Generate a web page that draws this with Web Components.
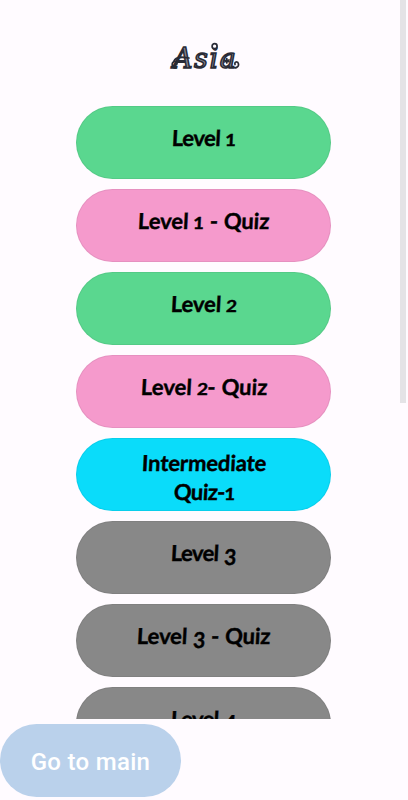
<!DOCTYPE html>
<html lang="en">
<head>
<meta charset="utf-8">
<meta name="viewport" content="width=device-width, initial-scale=1">
<title>Asia</title>
<style>
  html, body { margin: 0; height: 100%; overflow: hidden; }
  body { background: #fffbff; }
</style>
</head>
<body>
<level-screen>
  <region-title slot="title" width="63">Asia</region-title>
  <level-button kind="level"><fit-label width="65">Level 1</fit-label></level-button>
  <level-button kind="quiz"><fit-label width="133">Level 1 - Quiz</fit-label></level-button>
  <level-button kind="level"><fit-label width="67">Level 2</fit-label></level-button>
  <level-button kind="quiz"><fit-label width="128">Level 2- Quiz</fit-label></level-button>
  <level-button kind="intermediate"><fit-label width="126">Intermediate</fit-label><fit-label width="62">Quiz-1</fit-label></level-button>
  <level-button kind="locked"><fit-label width="67">Level 3</fit-label></level-button>
  <level-button kind="locked"><fit-label width="135">Level 3 - Quiz</fit-label></level-button>
  <level-button kind="locked"><fit-label width="67">Level 4</fit-label></level-button>
  <main-button slot="footer">Go to main</main-button>
</level-screen>

<script>
(function () {
  function shadow(el, html) {
    var root = el.attachShadow({ mode: "open" });
    root.innerHTML = html;
    return root;
  }

  // spread the letters until the run is as wide as asked
  function fit(run, target) {
    run.style.letterSpacing = "";
    run.style.marginRight = "";
    var gap = (target - run.getBoundingClientRect().width) / (run.textContent.length - 1);
    run.style.letterSpacing = gap.toFixed(3) + "px";
    run.style.marginRight = (-gap).toFixed(3) + "px";
  }

  class LevelButton extends HTMLElement {
    connectedCallback() {
      if (this.shadowRoot) return;
      shadow(this,
        "<style>" +
          ":host{display:flex;flex-direction:column;align-items:center;flex:none;box-sizing:border-box;" +
            "width:255px;height:73px;padding-top:16px;border-radius:36.5px;cursor:pointer;" +
            "border:1px solid rgba(0,0,0,.06);color:#000;font:700 22px Lato,sans-serif}" +
          ":host([kind=level]){background:#5ad78f}" +
          ":host([kind=quiz]){background:#f59acc}" +
          ":host([kind=intermediate]){background:#0adcfa;padding-top:9px}" +
          ":host([kind=locked]){background:#888}" +
        "</style><slot></slot>");
    }
  }

  class FitLabel extends HTMLElement {
    connectedCallback() {
      if (this.shadowRoot) return;
      // old-style figures: 1 and 2 sit at x-height, 3 and 4 hang below the line
      var html = this.textContent.replace(/\d/g, function (d) {
        return '<span class="' + (d > "2" ? "num low" : "num") + '">' + d + "</span>";
      });
      var root = shadow(this,
        "<style>" +
          ":host{display:block;height:29px;line-height:29px;white-space:nowrap}" +
          ".run{display:inline-block;transform:skewX(-3deg);word-spacing:.5px;-webkit-text-stroke:.4px #000}" +
          ".num{display:inline-block;font-size:16.5px;line-height:1;transform:scaleX(1.15)}" +
          ".low{font-size:22px;transform:translateY(3.5px) scaleX(.95)}" +
        "</style>" +
        '<span class="run">' + html + "</span>");
      fit(root.querySelector(".run"), Number(this.getAttribute("width")));
    }
  }

  class RegionTitle extends HTMLElement {
    connectedCallback() {
      if (this.shadowRoot) return;
      var root = shadow(this,
        "<style>" +
          ":host{display:block;position:relative;width:68px;height:40px;line-height:40px;white-space:nowrap;" +
            "font-family:'DejaVu Serif',serif;font-style:italic;font-size:27px;color:#85848f}" +
          ".run{display:inline-block;margin-left:2px;-webkit-text-stroke:1.5px #292b36}" +
          "svg{position:absolute;left:0;top:0;overflow:visible}" +
        "</style>" +
        '<span class="run">' + this.textContent + "</span>" +
        // curls of the lettering: dot ring, star in the bowl, loops at both ends
        '<svg width="68" height="40" fill="none" stroke="#292b36" stroke-width="1.7" stroke-linecap="round">' +
          '<circle cx="43.6" cy="7.2" r="2.5" fill="#fffbff"></circle>' +
          '<path d="M5 29C1 30 0 24 3 22.5C6 21.5 7 25 4.5 26"></path>' +
          '<path d="M3 22C5 17 12 18 18 19"></path>' +
          '<path d="M62 28C64 30 68 28 67.5 25C67 22 63 22.5 64 25.5"></path>' +
          '<path d="M55.8 19.5V24M53.6 21.2L58 22.6M58 21L53.8 22.8"></path>' +
        "</svg>");
      fit(root.querySelector(".run"), Number(this.getAttribute("width")));
    }
  }

  class MainButton extends HTMLElement {
    connectedCallback() {
      if (this.shadowRoot) return;
      shadow(this,
        "<style>" +
          ":host{display:flex;align-items:center;justify-content:center;box-sizing:border-box;" +
            "width:181px;height:73px;padding-top:2px;border-radius:36.5px;background:#bad1eb;color:#fff;" +
            "font:500 24px Roboto,sans-serif;letter-spacing:.3px;cursor:pointer}" +
        "</style><slot></slot>");
    }
  }

  class LevelScreen extends HTMLElement {
    connectedCallback() {
      if (this.shadowRoot) return;
      shadow(this,
        "<style>" +
          ":host{display:flex;flex-direction:column;width:408px;height:800px;overflow:hidden}" +
          ".scroller{display:flex;height:719px;flex:none;overflow:hidden;box-sizing:border-box}" +
          ".list{flex:1;display:flex;flex-direction:column;align-items:center;gap:9.9px;margin-left:7.8px}" +
          ".head{height:96.5px;flex:none;display:flex;justify-content:center;box-sizing:border-box;padding-top:39px;padding-left:2px}" +
          ".bar{flex:none;width:5.5px;height:402.5px;margin-right:2.5px;background:#e4e3e6}" +
          "footer{padding-top:5px}" +
        "</style>" +
        '<div class="scroller"><div class="list"><div class="head"><slot name="title"></slot></div><slot></slot></div>' +
        '<div class="bar"></div></div><footer><slot name="footer"></slot></footer>');
    }
  }

  // the screen and its buttons come first: labels are measured in the font they inherit
  customElements.define("level-screen", LevelScreen);
  customElements.define("level-button", LevelButton);
  customElements.define("fit-label", FitLabel);
  customElements.define("region-title", RegionTitle);
  customElements.define("main-button", MainButton);
})();
</script>
</body>
</html>
